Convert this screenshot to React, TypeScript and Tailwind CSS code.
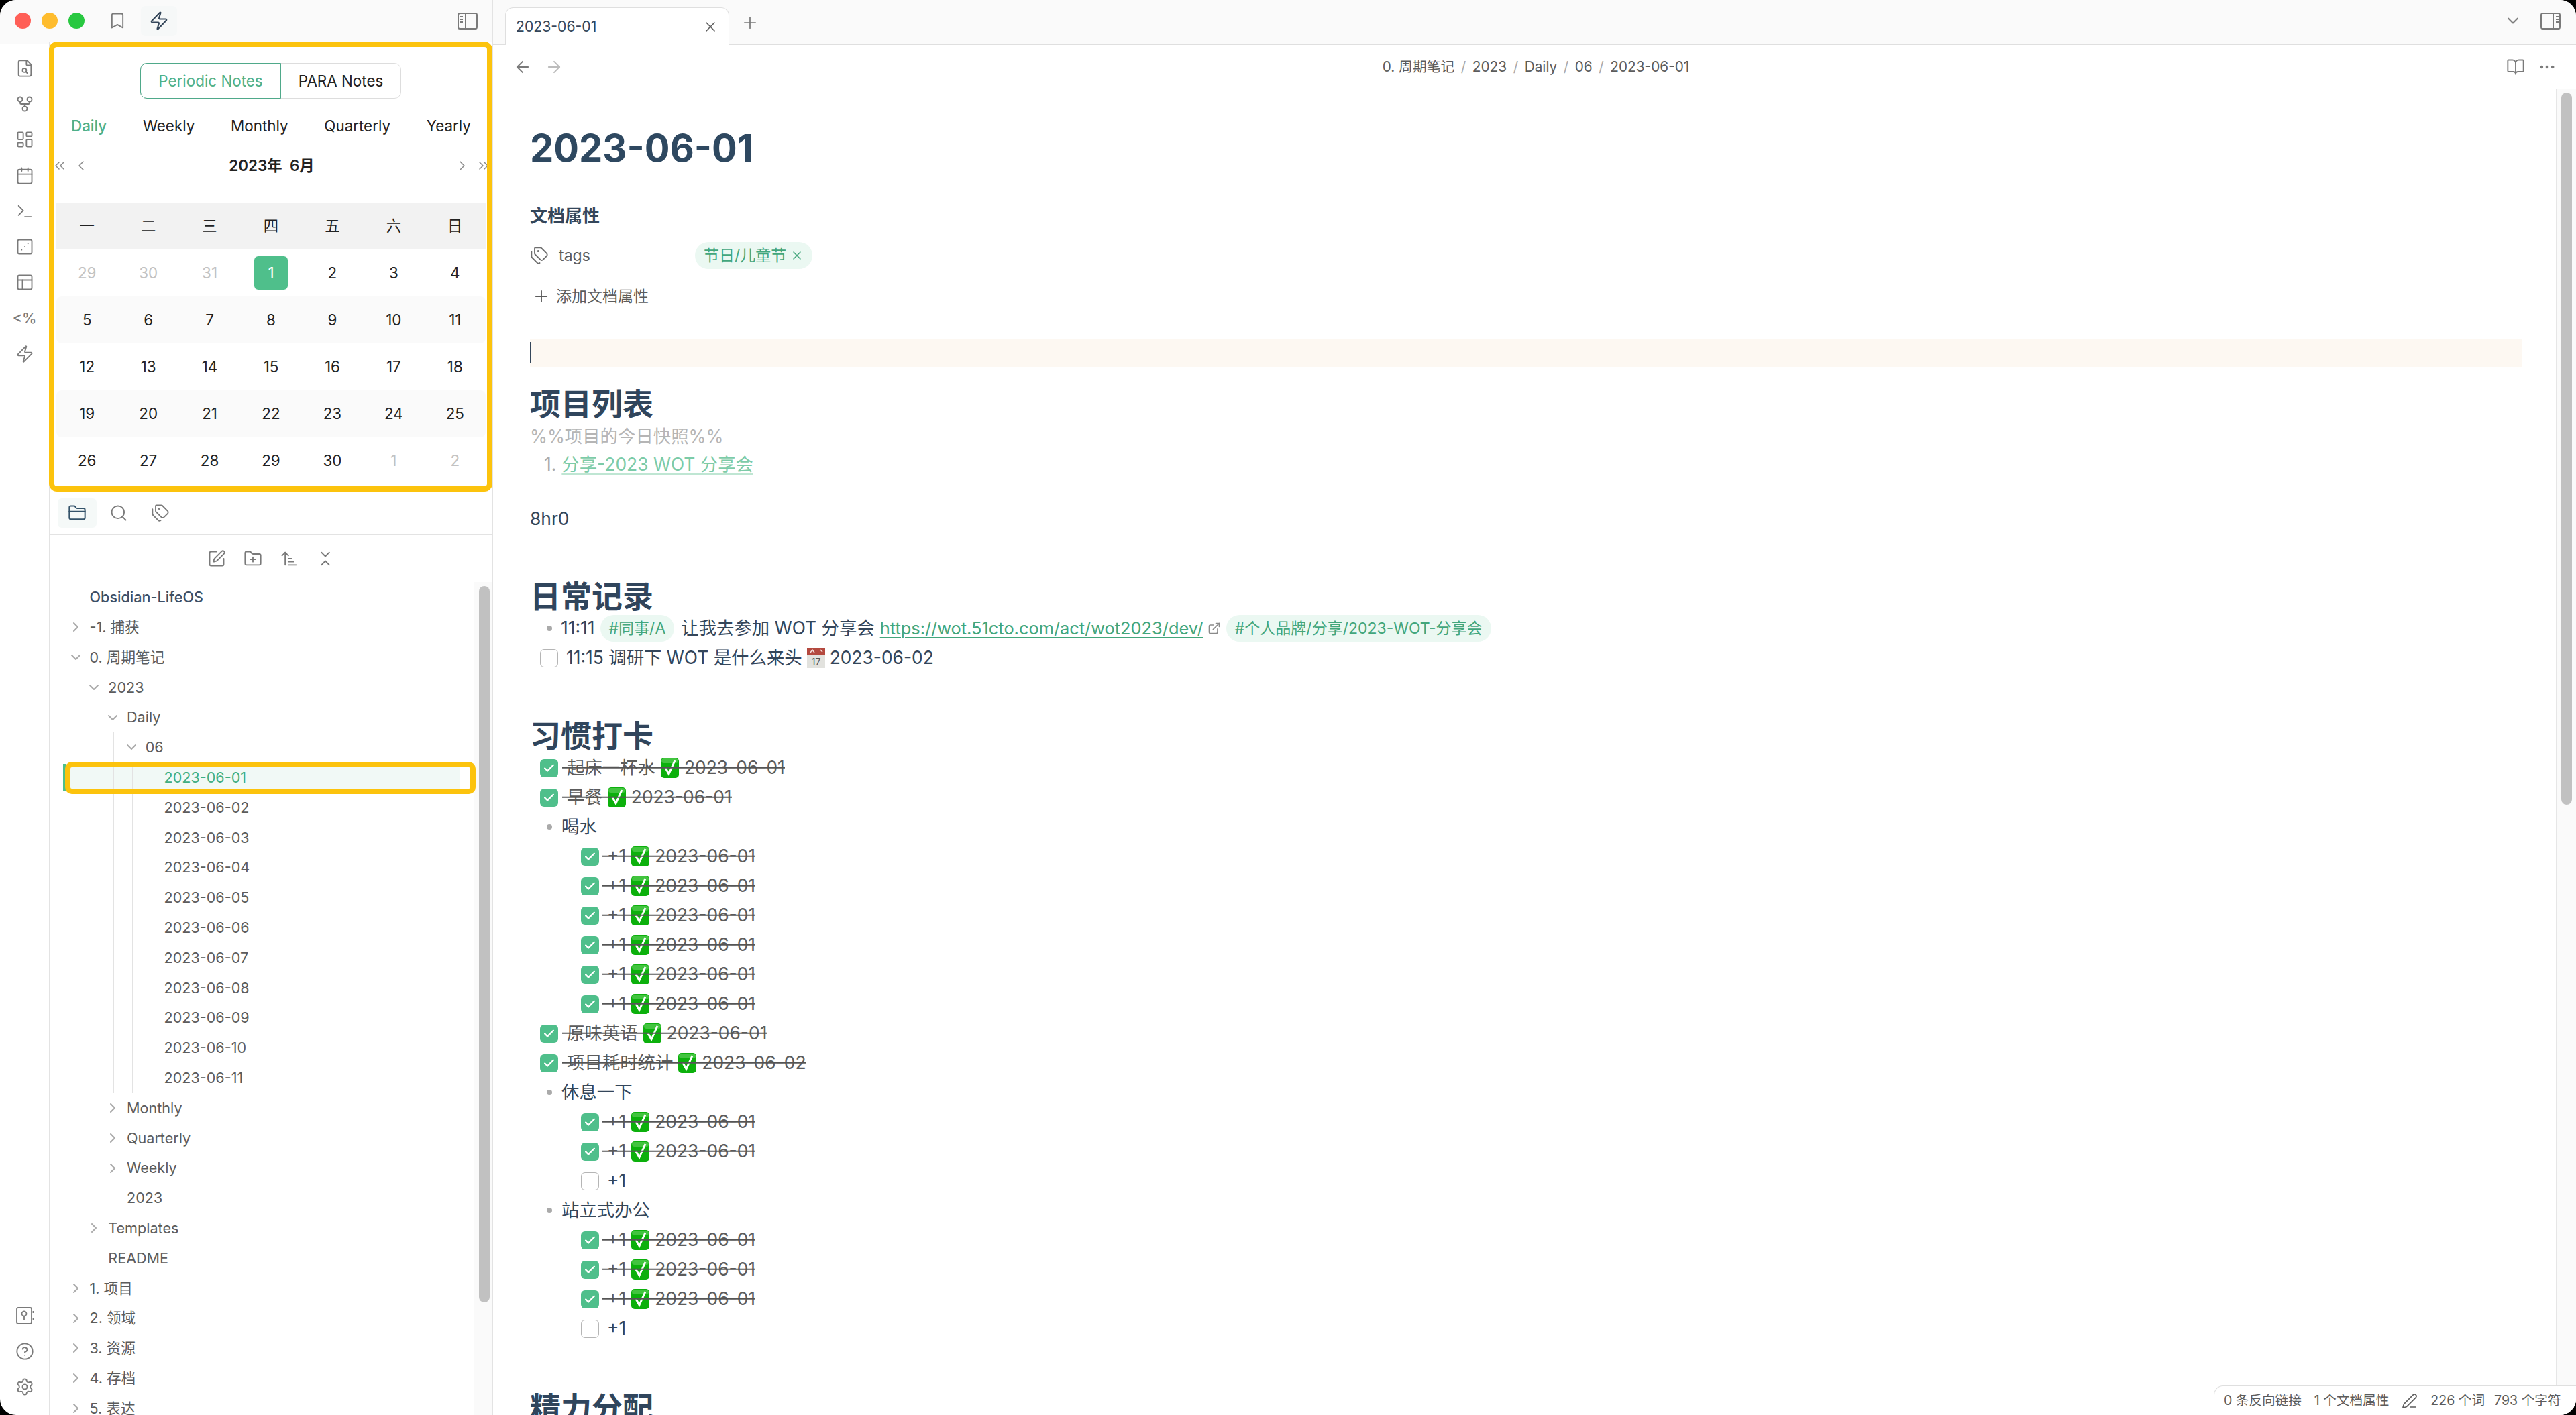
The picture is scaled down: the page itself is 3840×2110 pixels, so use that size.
import type { ReactNode } from 'react';
import {
  ArrowLeft,
  ArrowRight,
  ArrowUpNarrowWide,
  BookOpen,
  Bookmark,
  Calendar,
  Check,
  ChevronDown,
  ChevronLeft,
  ChevronRight,
  ChevronsDownUp,
  ChevronsLeft,
  ChevronsRight,
  CircleHelp,
  Dice3,
  Ellipsis,
  ExternalLink,
  FileSearch,
  FolderClosed,
  FolderPlus,
  GitFork,
  LayoutDashboard,
  PanelsTopLeft,
  PenLine,
  Plus,
  Search,
  Settings,
  SquarePen,
  Tags,
  Terminal,
  X,
  Zap,
} from 'lucide-react';

const ribbonIcons = [FileSearch, GitFork, LayoutDashboard, Calendar, Terminal, Dice3, PanelsTopLeft];
const weekDays = ['一', '二', '三', '四', '五', '六', '日'];
const calendarRows = [
  ['29', '30', '31', '1', '2', '3', '4'],
  ['5', '6', '7', '8', '9', '10', '11'],
  ['12', '13', '14', '15', '16', '17', '18'],
  ['19', '20', '21', '22', '23', '24', '25'],
  ['26', '27', '28', '29', '30', '1', '2'],
];
const dailyFiles = ['2023-06-02', '2023-06-03', '2023-06-04', '2023-06-05', '2023-06-06', '2023-06-07', '2023-06-08', '2023-06-09', '2023-06-10', '2023-06-11'];

function PanelIcon({ side }: { side: 'left' | 'right' }) {
  const lineX = side === 'left' ? 5 : 24;
  const divider = side === 'left' ? 12 : 19;
  return (
    <svg width="30" height="25" viewBox="0 0 30 25" fill="none" stroke="#7a7a7a" strokeWidth="2">
      <rect x="1" y="1" width="28" height="23" rx="2.5" />
      <path d={`M${divider} 1v23`} />
      <path d={`M${lineX - 1} 6h4M${lineX - 1} 10h4M${lineX - 1} 14h4`} />
    </svg>
  );
}

function VaultIcon() {
  return (
    <svg width="28" height="28" viewBox="0 0 28 28" fill="none" stroke="#7a7a7a" strokeWidth="1.8">
      <rect x="2" y="2" width="22" height="24" rx="2" />
      <circle cx="13" cy="11" r="3.5" />
      <path d="M13 14.5v6M26.5 7v3M26.5 17v3" />
    </svg>
  );
}

function GreenEmoji() {
  return (
    <svg width="27" height="30" viewBox="0 0 27 30" className="shrink-0">
      <rect width="27" height="30" rx="5" fill="#0cb00c" />
      <rect x="1" y="1" width="25" height="7" rx="4" fill="#6fd66a" opacity="0.55" />
      <path d="M7 15l5 9L21 4" fill="none" stroke="#fff" strokeWidth="3" />
    </svg>
  );
}

function CalendarEmoji() {
  return (
    <svg width="27" height="30" viewBox="0 0 27 30" className="shrink-0">
      <rect width="27" height="30" fill="#e2e2de" />
      <rect width="27" height="11" fill="#b4493f" />
      <path d="M5 7l3-4 3 4M20 3l3 3" fill="none" stroke="#f4dcd8" strokeWidth="1.5" />
      <text x="13.5" y="26" textAnchor="middle" fontSize="14" fill="#555">
        17
      </text>
    </svg>
  );
}

function TreeRow({ label, open, file, active }: { label: string; open?: boolean; file?: boolean; active?: boolean }) {
  return (
    <div className="flex h-[44.8px] items-center pl-[13px]">
      <span className="mr-[8px] flex w-[26px] shrink-0 justify-center text-[#aaaaaa]">
        {!file && (open ? <ChevronDown size={24} strokeWidth={2} /> : <ChevronRight size={24} strokeWidth={2} />)}
      </span>
      <span className={active ? 'text-[#3fae82]' : ''}>{label}</span>
    </div>
  );
}

function Branch({ children }: { children: ReactNode }) {
  return <div className="ml-[26.75px] border-l border-[#e3e3e3]">{children}</div>;
}

function DoneBox() {
  return (
    <span className="flex h-[27px] w-[27px] shrink-0 items-center justify-center rounded-[6px] bg-[#4fbf8b] text-white">
      <Check size={19} strokeWidth={3} />
    </span>
  );
}

function DoneTask({ text, date = '2023-06-01', nested }: { text: string; date?: string; nested?: boolean }) {
  return (
    <div className={`flex h-[44px] items-center ${nested ? 'pl-[47px]' : 'pl-[15px]'}`}>
      <DoneBox />
      <span className={`relative flex items-center gap-[8px] text-[#5c5c5c] ${nested ? 'ml-[5px] pl-[7px]' : 'ml-[6px] pl-[7px]'}`}>
        <span>{text}</span>
        <GreenEmoji />
        <span>{date}</span>
        <span className="absolute inset-x-0 top-1/2 h-[2.5px] -translate-y-1/2 bg-[#555555]" />
      </span>
    </div>
  );
}

function OpenTask({ children, nested }: { children: ReactNode; nested?: boolean }) {
  return (
    <div className={`flex h-[44px] items-center ${nested ? 'pl-[47px]' : 'pl-[15px]'}`}>
      <span className="h-[27px] w-[27px] shrink-0 rounded-[6px] border border-[#b5b5b5] bg-white" />
      <span className="ml-[12px] flex items-center gap-[7px]">{children}</span>
    </div>
  );
}

function Bullet({ children }: { children: ReactNode }) {
  return (
    <div className="flex h-[44px] items-center pl-[25px]">
      <span className="h-[8px] w-[8px] shrink-0 rounded-full bg-[#aaaaaa]" />
      <span className="ml-[14px] flex items-center">{children}</span>
    </div>
  );
}

function Heading({ children, className = '' }: { children: ReactNode; className?: string }) {
  return <h2 className={`flex h-[52px] items-center text-[46px] font-bold text-[#30455c] ${className}`}>{children}</h2>;
}

function TagPill({ children }: { children: ReactNode }) {
  return <span className="flex h-[40px] items-center rounded-[20px] bg-[#ebf8f2] px-[13px] text-[23px] text-[#42a67c]">{children}</span>;
}

function CalendarPanel() {
  return (
    <section className="-ml-px h-[671px] w-[661px] shrink-0 overflow-hidden rounded-[12px] border-[8px] border-[#fcc30d] bg-white text-[22.4px] text-[#222222]">
      <div className="mt-[24px] flex justify-center">
        <div className="flex h-[53px] w-[389px] items-center rounded-[10px] border border-[#dddddd]">
          <span className="-ml-px flex h-[53px] w-[210px] items-center justify-center rounded-l-[10px] border border-[#4fa98a] text-[#4fb088]">Periodic Notes</span>
          <span className="flex-1 text-center">PARA Notes</span>
        </div>
      </div>
      <div className="mt-[21px] flex h-[40px] items-center justify-between pl-[25px] pr-[24px]">
        <span className="font-medium text-[#4fb088]">Daily</span>
        <span>Weekly</span>
        <span>Monthly</span>
        <span>Quarterly</span>
        <span>Yearly</span>
      </div>
      <div className="mt-[19px] flex h-[40px] items-center text-[#8a8a8a]">
        <div className="-ml-[4px] flex w-[60px] gap-[8px]">
          <ChevronsLeft size={24} strokeWidth={1.5} />
          <ChevronLeft size={24} strokeWidth={1.5} />
        </div>
        <span className="flex-1 text-center font-semibold text-[#222222]">2023年&nbsp;&nbsp;6月</span>
        <div className="-mr-[7px] flex w-[60px] justify-end gap-[8px]">
          <ChevronRight size={24} strokeWidth={1.5} />
          <ChevronsRight size={24} strokeWidth={1.5} />
        </div>
      </div>
      <div className="ml-[3px] mt-[35px] w-[640px]">
        <div className="grid h-[70px] grid-cols-7 items-center bg-[#f2f2f2] text-center">
          {weekDays.map((day) => (
            <span key={day}>{day}</span>
          ))}
        </div>
        {calendarRows.map((row, rowIndex) => (
          <div key={rowIndex} className={`grid h-[70px] grid-cols-7 items-center rounded-[8px] text-center ${rowIndex % 2 === 1 ? 'bg-[#fafafa]' : ''}`}>
            {row.map((day, dayIndex) => {
              const faded = (rowIndex === 0 && dayIndex < 3) || (rowIndex === 4 && dayIndex > 4);
              const today = rowIndex === 0 && dayIndex === 3;
              return (
                <span key={dayIndex} className="flex justify-center">
                  <span className={`flex h-[50px] w-[50px] items-center justify-center rounded-[6px] ${today ? 'bg-[#4fbf8b] text-white' : ''} ${faded ? 'text-[#c2c2c2]' : ''}`}>{day}</span>
                </span>
              );
            })}
          </div>
        ))}
      </div>
    </section>
  );
}

function FileTree() {
  return (
    <div className="relative min-h-0 flex-1 text-[21.6px] text-[#5c5c5c]">
      <div className="absolute left-[20px] top-[271px] h-[40px] w-[592px] border-l-[4px] border-[#4fbf8b] bg-[#f1f9f6]" />
      <div className="relative pl-[12.5px]">
        <div className="flex h-[44.8px] items-center pl-[47px] font-medium text-[#3d4f66]">Obsidian-LifeOS</div>
        <TreeRow label="-1. 捕获" />
        <TreeRow label="0. 周期笔记" open />
        <Branch>
          <TreeRow label="2023" open />
          <Branch>
            <TreeRow label="Daily" open />
            <Branch>
              <TreeRow label="06" open />
              <Branch>
                <TreeRow label="2023-06-01" file active />
                {dailyFiles.map((name) => (
                  <TreeRow key={name} label={name} file />
                ))}
              </Branch>
            </Branch>
            <TreeRow label="Monthly" />
            <TreeRow label="Quarterly" />
            <TreeRow label="Weekly" />
            <TreeRow label="2023" file />
          </Branch>
          <TreeRow label="Templates" />
          <TreeRow label="README" file />
        </Branch>
        <TreeRow label="1. 项目" />
        <TreeRow label="2. 领域" />
        <TreeRow label="3. 资源" />
        <TreeRow label="4. 存档" />
        <TreeRow label="5. 表达" />
      </div>
      <div className="absolute left-[23px] top-[268px] h-[48px] w-[612px] rounded-[10px] border-[8px] border-[#fcc30d]" />
    </div>
  );
}

function LeftColumn() {
  return (
    <div className="flex h-full w-[735px] shrink-0 flex-col border-r border-[#e3e3e3]">
      <header className="flex h-[62px] shrink-0 items-center bg-[#fafafa] pl-[22px] pr-[22px]">
        <span className="h-[24px] w-[24px] rounded-full bg-[#ff5f57]" />
        <span className="ml-[16px] h-[24px] w-[24px] rounded-full bg-[#febc2e]" />
        <span className="ml-[16px] h-[24px] w-[24px] rounded-full bg-[#28c840]" />
        <Bookmark size={28} strokeWidth={1.6} className="ml-[35px] text-[#7a7a7a]" />
        <span className="ml-[21px] flex h-[44px] w-[54px] items-center justify-center rounded-[6px] bg-[#f6f8f8] text-[#34465a]">
          <Zap size={30} strokeWidth={1.7} />
        </span>
        <span className="ml-auto">
          <PanelIcon side="left" />
        </span>
      </header>
      <div className="flex min-h-0 flex-1">
        <nav className="flex w-[74px] shrink-0 flex-col items-center border-r border-[#e3e3e3] text-[#7a7a7a]">
          <div className="h-[4px] w-full shrink-0 border-b border-[#e3e3e3] bg-[#fafafa]" />
          <div className="mt-[22px] flex flex-col items-center gap-[25.2px]">
            {ribbonIcons.map((Icon, index) => (
              <Icon key={index} size={28} strokeWidth={1.6} />
            ))}
            <span className="h-[28px] text-[21.5px] font-medium leading-[28px]">&lt;%</span>
            <Zap size={28} strokeWidth={1.6} />
          </div>
          <div className="mt-auto mb-[28px] flex flex-col items-center gap-[25px]">
            <VaultIcon />
            <CircleHelp size={28} strokeWidth={1.6} />
            <Settings size={28} strokeWidth={1.6} />
          </div>
        </nav>
        <div className="flex min-w-0 flex-1 flex-col">
          <CalendarPanel />
          <div className="flex h-[65px] shrink-0 items-center gap-[4px] border-b border-[#e3e3e3] pl-[12px] text-[#7a7a7a]">
            <span className="flex h-[44px] w-[58px] items-center justify-center rounded-[6px] bg-[#f5f9f8] text-[#34536a]">
              <FolderClosed size={28} strokeWidth={1.7} />
            </span>
            <span className="flex w-[58px] justify-center">
              <Search size={28} strokeWidth={1.6} />
            </span>
            <span className="flex w-[58px] justify-center">
              <Tags size={28} strokeWidth={1.6} />
            </span>
          </div>
          <div className="flex h-[70px] shrink-0 items-center justify-center gap-[26px] text-[#7a7a7a]">
            <SquarePen size={28} strokeWidth={1.6} />
            <FolderPlus size={28} strokeWidth={1.6} />
            <ArrowUpNarrowWide size={28} strokeWidth={1.6} />
            <ChevronsDownUp size={28} strokeWidth={1.6} />
          </div>
          <div className="flex min-h-0 flex-1">
            <FileTree />
            <div className="w-[28px] shrink-0 border-l border-[#eeeeee] bg-[#fafafa] pl-[7px] pt-[6px]">
              <div className="h-[1068px] w-[16px] rounded-full bg-[#c1c1c1]" />
            </div>
          </div>
        </div>
      </div>
    </div>
  );
}

function Editor() {
  return (
    <div className="min-w-0 flex-1 pl-[55px] pr-[50px] text-[26.4px] text-[#34465a]">
      <h1 className="mt-[49px] flex h-[80px] items-center text-[56px] font-bold text-[#2e4860]">2023-06-01</h1>
      <div className="mt-[38px] flex h-[44px] items-center text-[26px] font-semibold">文档属性</div>
      <div className="mt-[16px] flex h-[44px] items-center text-[23px] text-[#5c5c5c]">
        <Tags size={28} strokeWidth={1.6} className="text-[#6e6e6e]" />
        <span className="ml-[15px] w-[203px]">tags</span>
        <TagPill>
          节日/儿童节
          <X size={20} strokeWidth={1.8} className="ml-[6px]" />
        </TagPill>
      </div>
      <div className="mt-[17px] flex h-[44px] items-center pl-[3px] text-[23px] text-[#5c5c5c]">
        <Plus size={28} strokeWidth={1.6} />
        <span className="ml-[8px]">添加文档属性</span>
      </div>
      <div className="mt-[41px] flex h-[42px] items-center bg-[#fdf8f2]">
        <span className="h-[32px] w-[2px] bg-[#34465a]" />
      </div>
      <Heading className="mt-[28px] h-[54px]">项目列表</Heading>
      <div className="flex h-[44px] items-center text-[#b5b5b5]">%%项目的今日快照%%</div>
      <div className="flex h-[40px] items-center pl-[21px]">
        <span className="text-[#aaaaaa]">1.</span>
        <span className="ml-[8px] text-[#7ccba8] underline decoration-[#bfe6d3] decoration-2 underline-offset-4">分享-2023 WOT 分享会</span>
      </div>
      <div className="mt-[39px] flex h-[44px] items-center">8hr0</div>
      <Heading className="mt-[67px]">日常记录</Heading>
      <div className="flex h-[44px] items-center pl-[25px]">
        <span className="h-[8px] w-[8px] shrink-0 rounded-full bg-[#aaaaaa]" />
        <span className="ml-[13px]">11:11</span>
        <span className="ml-[8px]">
          <TagPill>#同事/A</TagPill>
        </span>
        <span className="ml-[10px]">让我去参加 WOT 分享会</span>
        <span className="ml-[8px] text-[25.4px] text-[#42a67c] underline decoration-2 underline-offset-4">https://wot.51cto.com/act/wot2023/dev/</span>
        <ExternalLink size={20} strokeWidth={2} className="ml-[6px] text-[#8a8a8a]" />
        <span className="ml-[8px]">
          <TagPill>#个人品牌/分享/2023-WOT-分享会</TagPill>
        </span>
      </div>
      <OpenTask>
        <span>11:15 调研下 WOT 是什么来头</span>
        <CalendarEmoji />
        <span>2023-06-02</span>
      </OpenTask>
      <Heading className="mt-[68px]">习惯打卡</Heading>
      <DoneTask text="起床一杯水" />
      <DoneTask text="早餐" />
      <Bullet>喝水</Bullet>
      <div className="ml-[28px] border-l border-[#e8e8e8]">
        {[1, 2, 3, 4, 5, 6].map((n) => (
          <DoneTask key={n} text="+1" nested />
        ))}
      </div>
      <DoneTask text="原味英语" />
      <DoneTask text="项目耗时统计" date="2023-06-02" />
      <Bullet>休息一下</Bullet>
      <div className="ml-[28px] border-l border-[#e8e8e8]">
        <DoneTask text="+1" nested />
        <DoneTask text="+1" nested />
        <OpenTask nested>+1</OpenTask>
      </div>
      <Bullet>站立式办公</Bullet>
      <div className="ml-[28px] border-l border-[#e8e8e8]">
        <DoneTask text="+1" nested />
        <DoneTask text="+1" nested />
        <DoneTask text="+1" nested />
        <OpenTask nested>+1</OpenTask>
        <div className="ml-[60px] h-[41px] border-l border-[#e8e8e8]" />
      </div>
      <Heading className="mt-[29px]">精力分配</Heading>
    </div>
  );
}

function MainColumn() {
  return (
    <main className="relative flex h-full min-w-0 flex-1 flex-col">
      <div className="flex h-[67px] shrink-0 items-end border-b border-[#dfdfdf] bg-[#fafafa] pr-[23px]">
        <div className="-mb-px ml-[18px] flex h-[56px] w-[334px] items-center rounded-t-[12px] border border-b-0 border-[#dfdfdf] bg-white pl-[15px] pr-[15px] text-[21.2px] text-[#34465a]">
          <span className="flex-1">2023-06-01</span>
          <X size={24} strokeWidth={1.6} className="text-[#5c5c5c]" />
        </div>
        <Plus size={28} strokeWidth={1.5} className="mb-[18px] ml-[17px] text-[#7a7a7a]" />
        <div className="mb-[21px] ml-auto flex items-center gap-[27px] text-[#7a7a7a]">
          <ChevronDown size={28} strokeWidth={1.7} />
          <PanelIcon side="right" />
        </div>
      </div>
      <div className="flex h-[65px] shrink-0 items-center text-[20.8px] text-[#5c5c5c]">
        <div className="flex w-[164px] items-center gap-[19px] pl-[30px]">
          <ArrowLeft size={28} strokeWidth={1.6} className="text-[#7a7a7a]" />
          <ArrowRight size={28} strokeWidth={1.6} className="text-[#bdbdbd]" />
        </div>
        <div className="flex flex-1 items-center justify-center gap-[9.5px]">
          <span>0. 周期笔记</span>
          <span className="text-[#aaaaaa]">/</span>
          <span>2023</span>
          <span className="text-[#aaaaaa]">/</span>
          <span>Daily</span>
          <span className="text-[#aaaaaa]">/</span>
          <span>06</span>
          <span className="text-[#aaaaaa]">/</span>
          <span>2023-06-01</span>
        </div>
        <div className="flex w-[160px] items-center justify-end gap-[19px] pr-[29px] text-[#7a7a7a]">
          <BookOpen size={28} strokeWidth={1.6} />
          <Ellipsis size={28} strokeWidth={2} />
        </div>
      </div>
      <div className="flex min-h-0 flex-1">
        <Editor />
        <div className="w-[30px] shrink-0 border-l border-[#e6e6e6] bg-[#fafafa] pl-[7px] pt-[6px]">
          <div className="h-[1062px] w-[16px] rounded-full bg-[#c1c1c1]" />
        </div>
      </div>
      <div className="absolute bottom-0 right-0 flex h-[44px] w-[540px] items-center rounded-tl-[14px] border-l border-t border-[#dfdfdf] bg-white pl-[14px] text-[19.6px] text-[#5c5c5c]">
        <span>0 条反向链接</span>
        <span className="ml-[19px]">1 个文档属性</span>
        <PenLine size={24} strokeWidth={1.6} className="ml-[19px]" />
        <span className="ml-[19px]">226 个词</span>
        <span className="ml-[14px]">793 个字符</span>
      </div>
    </main>
  );
}

export default function App() {
  return (
    <div className="h-[2110px] w-[3840px] overflow-hidden bg-black font-['Inter','Noto_Sans_CJK_SC',sans-serif]">
      <div className="flex h-full overflow-hidden rounded-[24px] bg-white">
        <LeftColumn />
        <MainColumn />
      </div>
    </div>
  );
}
